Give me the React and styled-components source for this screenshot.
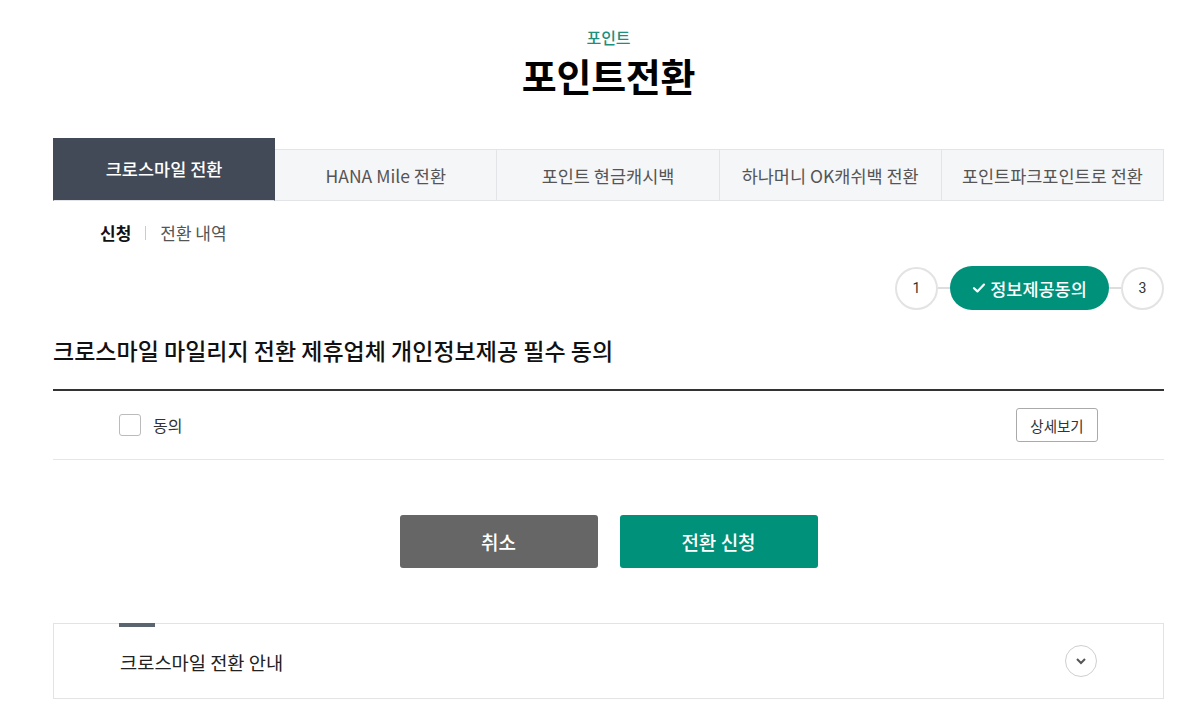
import styled, { createGlobalStyle } from 'styled-components';

const GlobalStyle = createGlobalStyle`
  body {
    margin: 0;
    background: #fff;
    font-family: "Noto Sans CJK KR", "Noto Sans", sans-serif;
    color: #111;
  }
  * { box-sizing: border-box; }
`;

const Page = styled.div`
  margin: 0 28px 0 53px;
  padding-top: 25px;
`;

const Header = styled.header`
  display: flex;
  flex-direction: column;
  align-items: center;
`;

const Eyebrow = styled.div`
  font-size: 16px;
  line-height: 24px;
  color: #1f8f7d;
  font-weight: 500;
`;

const Title = styled.h1`
  margin: 2px 0 0;
  font-size: 38px;
  line-height: 48px;
  font-weight: 700;
  color: #000;
  letter-spacing: -0.3px;
`;

const Tabs = styled.div`
  display: grid;
  grid-template-columns: repeat(5, 1fr);
  align-items: end;
  margin-top: 39px;
`;

const Tab = styled.div`
  display: flex;
  align-items: center;
  justify-content: center;
  height: ${p => (p.$active ? '63px' : '52px')};
  background: ${p => (p.$active ? '#414a56' : '#f5f6f8')};
  color: ${p => (p.$active ? '#fff' : '#555')};
  font-size: 17.5px;
  font-weight: ${p => (p.$active ? 500 : 400)};
  padding-bottom: ${p => (p.$active ? '2px' : '0')};
  border: 1px solid ${p => (p.$active ? '#414a56' : '#e2e4e7')};
  border-left: ${p => (p.$first ? '1px solid #414a56' : 'none')};
  border-bottom-color: #e2e4e7;
`;

const SubNav = styled.div`
  display: flex;
  align-items: center;
  margin-top: 19px;
  padding-left: 47px;
  font-size: 17px;
`;

const SubItem = styled.span`
  color: ${p => (p.$active ? '#111' : '#555')};
  font-weight: ${p => (p.$active ? 700 : 400)};
`;

const SubDivider = styled.span`
  width: 1px;
  height: 14px;
  background: #ccc;
  margin: 0 14px;
`;

const Steps = styled.div`
  display: flex;
  justify-content: flex-end;
  align-items: center;
  margin-top: 21px;
`;

const StepCircle = styled.div`
  width: 43px;
  height: 43px;
  border-radius: 50%;
  border: 2px solid #e3e3e3;
  display: flex;
  align-items: center;
  justify-content: center;
  font-family: Roboto, "Noto Sans", sans-serif;
  font-size: 14px;
  font-weight: 400;
  color: #333;
  background: #fff;
`;

const StepLine = styled.div`
  width: 12px;
  height: 2px;
  background: #ddd;
`;

const StepActive = styled.div`
  height: 44px;
  width: 159px;
  border-radius: 22px;
  background: #00917b;
  color: #fff;
  display: flex;
  align-items: center;
  justify-content: center;
  gap: 4px;
  font-size: 17.5px;
  font-weight: 500;
`;

const SectionTitle = styled.h2`
  margin: 25px 0 0;
  font-size: 23px;
  line-height: 30px;
  font-weight: 500;
  color: #111;
`;

const AgreeRow = styled.div`
  margin-top: 24px;
  border-top: 2px solid #333;
  border-bottom: 1px solid #e6e6e6;
  height: 71px;
  display: flex;
  align-items: center;
  justify-content: space-between;
  padding: 0 66px;
`;

const CheckLabel = styled.label`
  display: flex;
  align-items: center;
  gap: 12px;
  font-size: 16px;
  color: #333;
`;

const CheckBox = styled.span`
  width: 22px;
  height: 22px;
  border: 1px solid #bbb;
  border-radius: 3px;
  background: #fff;
`;

const DetailButton = styled.button`
  height: 34px;
  width: 82px;
  border: 1px solid #aaa;
  border-radius: 3px;
  background: #fff;
  font-family: inherit;
  font-size: 14.5px;
  color: #333;
  padding: 0;
`;

const Actions = styled.div`
  display: flex;
  justify-content: center;
  gap: 22px;
  margin-top: 55px;
`;

const ActionButton = styled.button`
  width: 198px;
  height: 53px;
  border: none;
  border-radius: 3px;
  background: ${p => (p.$primary ? '#00917b' : '#666')};
  color: #fff;
  font-family: inherit;
  font-size: 19px;
  font-weight: 500;
`;

const Guide = styled.div`
  margin-top: 55px;
  border: 1px solid #e3e3e3;
  height: 76px;
  display: flex;
  align-items: center;
  justify-content: space-between;
  padding: 0 66px;
  position: relative;
`;

const GuideMark = styled.span`
  position: absolute;
  top: -1px;
  left: 65px;
  width: 36px;
  height: 4px;
  background: #5a6570;
`;

const GuideTitle = styled.span`
  font-size: 18.7px;
  color: #222;
`;

const ToggleCircle = styled.span`
  width: 32px;
  height: 32px;
  border-radius: 50%;
  border: 1px solid #cfcfcf;
  display: flex;
  align-items: center;
  justify-content: center;
`;

const tabs = ['크로스마일 전환', 'HANA Mile 전환', '포인트 현금캐시백', '하나머니 OK캐쉬백 전환', '포인트파크포인트로 전환'];

export default function App() {
  return (
    <>
      <GlobalStyle />
      <Page>
        <Header>
          <Eyebrow>포인트</Eyebrow>
          <Title>포인트전환</Title>
        </Header>
        <Tabs>
          {tabs.map((t, i) => (
            <Tab key={t} $active={i === 0} $first={i === 0}>{t}</Tab>
          ))}
        </Tabs>
        <SubNav>
          <SubItem $active>신청</SubItem>
          <SubDivider />
          <SubItem>전환 내역</SubItem>
        </SubNav>
        <Steps>
          <StepCircle>1</StepCircle>
          <StepLine />
          <StepActive>
            <svg width="14" height="14" viewBox="0 0 14 14" fill="none">
              <path d="M2 7.2 L5.4 10.4 L12 3.6" stroke="#fff" strokeWidth="2.2" strokeLinecap="round" strokeLinejoin="round" />
            </svg>
            정보제공동의
          </StepActive>
          <StepLine />
          <StepCircle>3</StepCircle>
        </Steps>
        <SectionTitle>크로스마일 마일리지 전환 제휴업체 개인정보제공 필수 동의</SectionTitle>
        <AgreeRow>
          <CheckLabel>
            <CheckBox />
            동의
          </CheckLabel>
          <DetailButton>상세보기</DetailButton>
        </AgreeRow>
        <Actions>
          <ActionButton>취소</ActionButton>
          <ActionButton $primary>전환 신청</ActionButton>
        </Actions>
        <Guide>
          <GuideMark />
          <GuideTitle>크로스마일 전환 안내</GuideTitle>
          <ToggleCircle>
            <svg width="12" height="8" viewBox="0 0 12 8" fill="none">
              <path d="M2 2 L6 6 L10 2" stroke="#555" strokeWidth="2" />
            </svg>
          </ToggleCircle>
        </Guide>
      </Page>
    </>
  );
}
